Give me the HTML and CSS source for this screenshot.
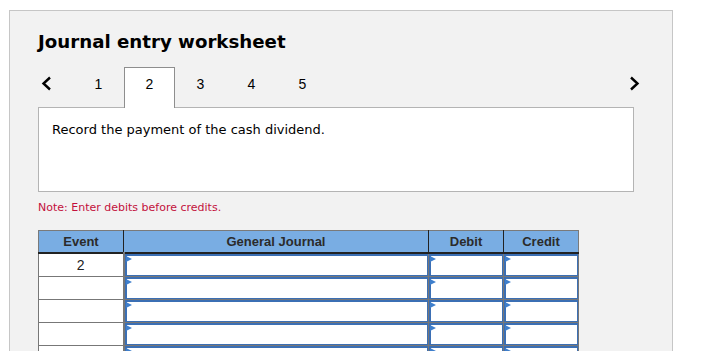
FILE: index.html
```html
<!DOCTYPE html>
<html lang="en">
<head>
<meta charset="utf-8">
<title>Journal entry worksheet</title>
<link rel="stylesheet" href="styles.css">
</head>
<body>
<div class="panel">
  <h1 class="title">Journal entry worksheet</h1>
  <div class="tabs">
    <span class="arrow prev"><svg width="11" height="15" viewBox="0 0 11 15"><polyline points="9,1.5 2.5,7.5 9,13.5" fill="none" stroke="#000" stroke-width="2.4"/></svg></span>
    <div class="tablist">
      <span class="tab">1</span>
      <span class="tab active">2</span>
      <span class="tab">3</span>
      <span class="tab">4</span>
      <span class="tab">5</span>
    </div>
    <span class="arrow next"><svg width="11" height="15" viewBox="0 0 11 15"><polyline points="2,1.5 8.5,7.5 2,13.5" fill="none" stroke="#000" stroke-width="2.4"/></svg></span>
  </div>
  <div class="question">Record the payment of the cash dividend.</div>
  <p class="note">Note: Enter debits before credits.</p>
  <table class="journal">
    <colgroup>
      <col class="c-event"><col class="c-gj"><col class="c-amt"><col class="c-amt">
    </colgroup>
    <thead>
      <tr><th>Event</th><th>General Journal</th><th>Debit</th><th>Credit</th></tr>
    </thead>
    <tbody>
      <tr><td class="ev">2</td><td class="in"><div class="field"><i class="mark"></i></div></td><td class="in"><div class="field"><i class="mark"></i></div></td><td class="in"><div class="field"><i class="mark"></i></div></td></tr>
      <tr><td class="ev"></td><td class="in"><div class="field"><i class="mark"></i></div></td><td class="in"><div class="field"><i class="mark"></i></div></td><td class="in"><div class="field"><i class="mark"></i></div></td></tr>
      <tr><td class="ev"></td><td class="in"><div class="field"><i class="mark"></i></div></td><td class="in"><div class="field"><i class="mark"></i></div></td><td class="in"><div class="field"><i class="mark"></i></div></td></tr>
      <tr><td class="ev"></td><td class="in"><div class="field"><i class="mark"></i></div></td><td class="in"><div class="field"><i class="mark"></i></div></td><td class="in"><div class="field"><i class="mark"></i></div></td></tr>
      <tr><td class="ev"></td><td class="in"><div class="field"><i class="mark"></i></div></td><td class="in"><div class="field"><i class="mark"></i></div></td><td class="in"><div class="field"><i class="mark"></i></div></td></tr>
    </tbody>
  </table>
</div>
</body>
</html>
```

FILE: styles.css
```css
html, body {
  margin: 0;
  padding: 0;
  background: #fff;
}

body {
  font-family: "DejaVu Sans", Verdana, sans-serif;
  color: #000;
}

.panel {
  box-sizing: border-box;
  width: 664px;
  margin: 10px 0 0 9px;
  padding: 20px 0 40px 28px;
  background: #f2f2f2;
  border: 1px solid #c6c6c6;
}

.title {
  margin: 0;
  font-size: 18.2px;
  line-height: 22px;
  font-weight: bold;
  color: #000;
}

.tabs {
  display: flex;
  align-items: stretch;
  height: 40px;
  margin-top: 14px;
}

.arrow {
  display: flex;
  align-items: flex-start;
  padding-top: 9px;
}

.prev {
  margin-left: 3px;
}

.next {
  margin-left: auto;
  margin-right: 32px;
}

.tablist {
  display: flex;
  margin-left: 21px;
}

.tab {
  box-sizing: border-box;
  width: 51px;
  height: 41px;
  padding-top: 8px;
  font-family: "Liberation Sans", Arial, sans-serif;
  font-size: 14px;
  line-height: 16px;
  text-align: center;
  color: #000;
  border: 1px solid transparent;
  border-bottom: none;
}

.tab.active {
  position: relative;
  z-index: 1;
  background: #fff;
  border-color: #8e8e8e;
}

.question {
  box-sizing: border-box;
  width: 596px;
  height: 85px;
  padding: 14px 13px;
  background: #fff;
  border: 1px solid #b4b4b4;
  font-size: 13px;
  line-height: 16px;
  color: #000;
}

.note {
  margin: 9px 0 0;
  font-size: 11px;
  line-height: 13px;
  color: #c3103c;
}

.journal {
  margin-top: 16px;
  width: 541px;
  table-layout: fixed;
  border-collapse: collapse;
  font-family: "Liberation Sans", Arial, sans-serif;
}

.c-event { width: 85px; }
.c-gj { width: 305px; }
.c-amt { width: 75px; }

.journal th {
  height: 21px;
  padding: 0;
  background: #79ade3;
  color: #2b2b2b;
  font-size: 13px;
  font-weight: bold;
  text-align: center;
  border: 1px solid #222;
  border-top-color: #7a7a7a;
}

.journal th:first-child {
  border-left-color: #7a7a7a;
}

.journal th:last-child {
  border-right-color: #7a7a7a;
}

.journal thead tr {
  border-bottom: 2px solid #222;
}

.journal td {
  padding: 0;
  height: 22px;
  border: 1px solid #777;
  background: #fff;
}

.journal td.ev {
  text-align: center;
  font-size: 14px;
  color: #222;
  border-right: 2px solid #777;
}

.field {
  position: relative;
  box-sizing: border-box;
  height: 22px;
  border: 2px solid #3b6fb4;
  border-right-width: 1px;
  border-bottom-width: 1px;
}

.mark {
  position: absolute;
  left: -1px;
  top: 0;
  width: 0;
  height: 0;
  border-style: solid;
  border-width: 3.5px 0 3.5px 6px;
  border-color: transparent transparent transparent #3f7fcc;
}
```
